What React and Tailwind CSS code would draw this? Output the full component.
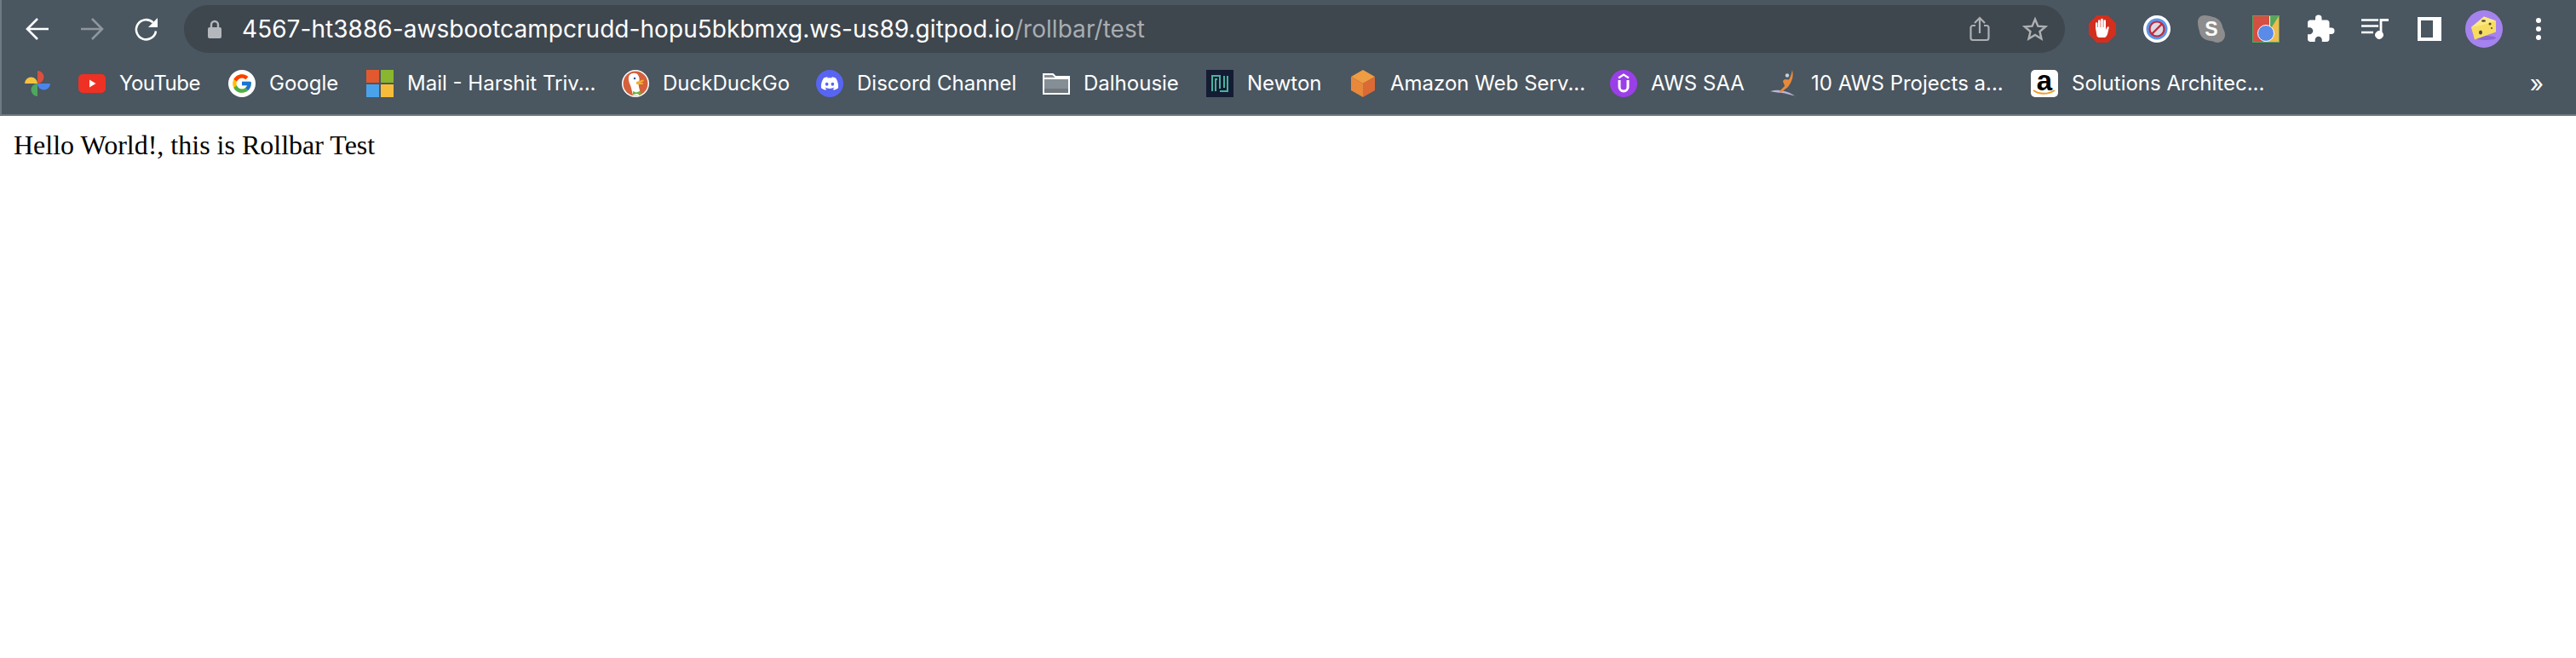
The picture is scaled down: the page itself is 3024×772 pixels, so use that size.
import { FaDiscord } from 'react-icons/fa';
import { FcGoogle } from 'react-icons/fc';
import { MdExtension } from 'react-icons/md';

function Back({ color = '#ffffff', flip = false }) {
  return (
    <svg width="28" height="28" viewBox="0 0 28 28" fill="none" stroke={color} strokeWidth="2.6" className={flip ? 'rotate-180' : ''}>
      <path d="M27 14H2.5M14 2 2 14l12 12" />
    </svg>
  );
}

function Reload() {
  return (
    <svg width="30" height="30" viewBox="0 0 30 30" fill="none">
      <path d="M22.6 7.4A11.6 11.6 0 1 0 26 17.5" stroke="#ffffff" strokeWidth="2.6" />
      <path d="M28 2v11H17z" fill="#ffffff" />
    </svg>
  );
}

function Lock() {
  return (
    <svg width="16" height="22" viewBox="0 0 16 22">
      <path d="M4 10V6a4 4 0 0 1 8 0v4" fill="none" stroke="#b4b8bd" strokeWidth="2.4" />
      <rect y="9" width="16" height="13" rx="2" fill="#b4b8bd" />
    </svg>
  );
}

function Share() {
  return (
    <svg width="24" height="30" viewBox="0 0 24 30" fill="none" stroke="#adb0b3" strokeWidth="2.2">
      <path d="M7 11H4a2.5 2.5 0 0 0-2.5 2.5v12A2.5 2.5 0 0 0 4 28h16a2.5 2.5 0 0 0 2.5-2.5v-12A2.5 2.5 0 0 0 20 11h-3" />
      <path d="M12 20V2M6 8l6-6 6 6" />
    </svg>
  );
}

function Star() {
  return (
    <svg width="30" height="30" viewBox="0 0 30 30" fill="none" stroke="#adb0b3" strokeWidth="2.4" strokeLinejoin="miter">
      <path d="m15 3.5 3.4 8.1 8.7.7-6.6 5.7 2 8.5-7.500-4.500-7.500 4.500 2-8.500-6.600-5.700 8.700-.7z" />
    </svg>
  );
}

function AdBlock() {
  return (
    <svg width="32" height="32" viewBox="0 0 32 32">
      <path d="M9.500 0h13L32 9.500v13L22.500 32h-13L0 22.500v-13z" fill="#d32f1f" />
      <path d="M9.500 24 8 15V9.500a1.200 1.200 0 0 1 2.400 0V14h.6V6.500a1.300 1.300 0 0 1 2.600 0V14h.6V5a1.300 1.300 0 0 1 2.600 0v9h.6V6.500a1.300 1.300 0 0 1 2.600 0V17l1.600-3c.8-1.300 2.600-.6 2.100.8L22 22c-.8 2-2 4-3.500 4h-5.500c-1.500 0-3-.6-3.500-2z" fill="#ffffff" />
    </svg>
  );
}

function NoSign() {
  return (
    <svg width="32" height="32" viewBox="0 0 32 32" fill="none">
      <circle cx="16" cy="16" r="16" fill="#ffffff" />
      <circle cx="16" cy="16" r="12.500" fill="#5a96e8" />
      <circle cx="16" cy="16" r="8.500" fill="#d8dce4" stroke="#c4283c" strokeWidth="2.200" />
      <path d="m10 22 12-12" stroke="#c4283c" strokeWidth="2.400" />
    </svg>
  );
}

function SkypeLike() {
  return (
    <div className="relative w-[32px] h-[32px] flex items-center justify-center">
      <svg width="32" height="32" viewBox="0 0 32 32" className="absolute inset-0">
        <path d="M8 0c4 0 7 1 10 2 6 1 10 6 11 11 0 2 3 5 3 10 0 5-4 9-9 9-3 0-5-2-8-2C8 29 3 26 2 19 1 15 0 12 0 8c0-5 3-8 8-8z" fill="#8d8d8d" />
      </svg>
      <span className="relative text-white font-bold text-[23px] leading-none font-['Liberation_Sans',sans-serif]">S</span>
    </div>
  );
}

function ColorBlock() {
  return (
    <svg width="32" height="32" viewBox="0 0 32 32">
      <rect width="32" height="32" fill="#57a65c" />
      <rect x="1" y="1" width="30" height="30" fill="#f0bb4f" />
      <path d="M1 1h19v17L13 31H1z" fill="#d54f42" />
      <path d="M20 1h11L22 15h-2z" fill="#57a65c" />
      <path d="M20 1h1v18h-1z" fill="#ffffff" />
      <circle cx="16" cy="21" r="9.500" fill="#5a8be8" stroke="#ffffff" />
    </svg>
  );
}

function Media() {
  return (
    <svg width="32" height="24" viewBox="0 0 32 24" fill="none" stroke="#ffffff">
      <path d="M0 1.500h20M0 8.500h20M0 16h14" strokeWidth="2.600" />
      <path d="M23 19V1.500h9" strokeWidth="2.800" />
      <circle cx="21" cy="19" r="4.500" fill="#ffffff" />
    </svg>
  );
}

function SidePanel() {
  return (
    <svg width="28" height="28" viewBox="0 0 28 28">
      <path d="M0 0h28v28H0zM4 4v20h14V4z" fill="#ffffff" fillRule="evenodd" />
    </svg>
  );
}

function Cheese() {
  return (
    <svg width="44" height="44" viewBox="0 0 44 44">
      <circle cx="22" cy="22" r="22" fill="#a583ee" />
      <ellipse cx="24" cy="32.500" rx="12" ry="2.500" fill="#8a66d8" />
      <path d="M7 20 22 7.500l14 5v13L11 34.500z" fill="#f6dd62" />
      <path d="M7 20 22 7.500l14 5-15 4.500z" fill="#fbe983" />
      <ellipse cx="21.500" cy="12.500" rx="2.500" ry="1.200" fill="#4f4738" />
      <circle cx="29" cy="16" r="1.500" fill="#4f4738" />
      <circle cx="31" cy="21" r="1" fill="#4f4738" />
      <ellipse cx="18" cy="26" rx="2" ry="2.500" fill="#4f4738" />
    </svg>
  );
}

function Dots() {
  return (
    <svg width="8" height="28" viewBox="0 0 8 28" fill="#ffffff">
      <circle cx="4" cy="4" r="3" />
      <circle cx="4" cy="14" r="3" />
      <circle cx="4" cy="24" r="3" />
    </svg>
  );
}

function Photos() {
  return (
    <svg width="32" height="32" viewBox="0 0 32 32">
      <path d="M16 1a7.500 7.500 0 0 1 0 15z" fill="#d9503f" />
      <path d="M31 16a7.500 7.500 0 0 1-15 0z" fill="#4c85ea" />
      <path d="M16 31a7.500 7.500 0 0 1 0-15z" fill="#4fa65d" />
      <path d="M1 16a7.500 7.500 0 0 1 15 0z" fill="#f4c33d" />
    </svg>
  );
}

function YouTube() {
  return (
    <svg width="32" height="32" viewBox="0 0 32 32">
      <rect y="5" width="32" height="22" rx="5" fill="#ee3124" />
      <path d="m13 11.500 7.500 4.500-7.500 4.500z" fill="#ffffff" />
    </svg>
  );
}

function GoogleIcon() {
  return (
    <div className="w-[32px] h-[32px] rounded-full bg-white flex items-center justify-center">
      <FcGoogle size={26} />
    </div>
  );
}

function Microsoft() {
  return (
    <svg width="32" height="32" viewBox="0 0 32 32">
      <rect width="15" height="15" fill="#e2592f" />
      <rect x="17" width="15" height="15" fill="#8ab52f" />
      <rect y="17" width="15" height="15" fill="#4aa3ea" />
      <rect x="17" y="17" width="15" height="15" fill="#f7bd3a" />
    </svg>
  );
}

function Duck() {
  return (
    <svg width="32" height="32" viewBox="0 0 32 32">
      <circle cx="16" cy="16" r="16" fill="#ffffff" />
      <circle cx="16" cy="16" r="14.500" fill="#d5613c" />
      <path d="M9 6c3-3 8-3 10 0 2 3 2 6 1 8-1 3 0 6 1 10l-1 6h-7c-1-5-2-9-3-12-2-4-3-9-1-12z" fill="#ffffff" />
      <path d="m17 14 8-2.500c1 0 1 1.500 0 2l-3 1.500 3 .5c.5.800 0 1.500-1 1.500h-7z" fill="#f4b12c" />
      <path d="m13 25 4 1.500 5-2v5l-5-1.500-4 1.500z" fill="#6fb53a" />
      <circle cx="15" cy="10" r="1.200" fill="#2d4f8e" />
    </svg>
  );
}

function DiscordIcon() {
  return (
    <div className="w-[32px] h-[32px] rounded-full bg-[#5865f2] flex items-center justify-center text-white">
      <FaDiscord size={22} />
    </div>
  );
}

function Folder() {
  return (
    <svg width="32" height="32" viewBox="0 0 32 32">
      <path d="M1 5h11l3 3h16v20H1z" fill="#868e95" stroke="#ffffff" strokeWidth="2" />
      <path d="M2 10h28" stroke="#ffffff" strokeWidth="2" />
      <rect x="2" y="22" width="28" height="5" fill="#6f767d" />
    </svg>
  );
}

function NewtonIcon() {
  return (
    <svg width="32" height="32" viewBox="0 0 32 32" fill="none">
      <rect width="32" height="32" fill="#141c33" />
      <path d="M7 25V7h9v15M25 7v18h-9" stroke="#47b39c" strokeWidth="2" />
      <path d="M11 25V11h2M21 7v14" stroke="#47b39c" strokeWidth="2" />
    </svg>
  );
}

function AwsBox() {
  return (
    <svg width="32" height="32" viewBox="0 0 32 32">
      <path d="m16 0 14 8-14 8L2 8z" fill="#f09c42" />
      <path d="m2 8 14 8v16L2 24z" fill="#e8883a" />
      <path d="m30 8-14 8v16l14-8z" fill="#dc6a35" />
    </svg>
  );
}

function Udemy() {
  return (
    <svg width="32" height="32" viewBox="0 0 32 32" fill="none">
      <circle cx="16" cy="16" r="16" fill="#9a3fe8" />
      <path d="m10 9.500 6-4 6 4" stroke="#ffffff" strokeWidth="2.200" />
      <path d="M11 12v8a5 5 0 0 0 10 0v-8" stroke="#ffffff" strokeWidth="3" />
    </svg>
  );
}

function Figure() {
  return (
    <svg width="32" height="32" viewBox="0 0 32 32" fill="none">
      <path d="M0 25c6-1.500 11-1.500 15-.5 5 1 10 3 14 6-6-1-11-3-15-3.500-5-.6-10-.5-14-2z" fill="#b9b4d8" />
      <path d="M26 0c1 5 1 9-1 13-1 3-3 5-4 7l-9 7-1-2 6-6c0-2-2-4-2-6l2-2 5 .5c2-3 3-7 4-11.500z" fill="#e8893a" />
      <circle cx="20" cy="6.500" r="2.200" fill="#c8d0d8" />
    </svg>
  );
}

function Amazon() {
  return (
    <div className="relative w-[32px] h-[32px] rounded-[5px] bg-white flex justify-center text-black">
      <span className="text-[33px] leading-[26px] font-bold font-['Liberation_Sans',sans-serif]">a</span>
      <svg width="32" height="32" viewBox="0 0 32 32" fill="none" className="absolute inset-0">
        <path d="M3 24c7 5 17 5 25 0" stroke="#f39c27" strokeWidth="2" />
      </svg>
    </div>
  );
}

const bookmarks = [
  { icon: Photos, label: '', width: 'w-0 mr-[-2px]' },
  { icon: YouTube, label: 'YouTube', width: 'w-[94px] tracking-[-0.5px]' },
  { icon: GoogleIcon, label: 'Google', width: 'w-[80px]' },
  { icon: Microsoft, label: 'Mail - Harshit Triv...', width: 'w-[218px]' },
  { icon: Duck, label: 'DuckDuckGo', width: 'w-[146px]' },
  { icon: DiscordIcon, label: 'Discord Channel', width: 'w-[184px]' },
  { icon: Folder, label: 'Dalhousie', width: 'w-[110px]' },
  { icon: NewtonIcon, label: 'Newton', width: 'w-[86px]' },
  { icon: AwsBox, label: 'Amazon Web Serv...', width: 'w-[224px]' },
  { icon: Udemy, label: 'AWS SAA', width: 'w-[106px]' },
  { icon: Figure, label: '10 AWS Projects a...', width: 'w-[224px]' },
  { icon: Amazon, label: 'Solutions Architec...', width: 'w-[224px]' },
];

function IconButton({ children }) {
  return <div className="w-[64px] h-[56px] shrink-0 flex items-center justify-center">{children}</div>;
}

export default function App() {
  return (
    <div className="min-h-screen bg-white">
      <div className="bg-[#4a5660] border-l-2 border-b-2 border-[#6d7a83] font-['Inter',sans-serif] text-white">
        <div className="flex items-start h-[68px] pt-[6px] pl-[10px]">
          <IconButton><Back /></IconButton>
          <IconButton><Back color="#8f979d" flip /></IconButton>
          <IconButton><Reload /></IconButton>
          <div className="ml-[12px] w-[2208px] h-[56px] shrink-0 rounded-full bg-[#3e464e] flex items-center pl-[28px] pr-[20px]">
            <Lock />
            <div className="ml-[24px] text-[28px] leading-none tracking-[0.05px] whitespace-nowrap">
              4567-ht3886-awsbootcampcrudd-hopu5bkbmxg.ws-us89.gitpod.io<span className="text-[#a9adb1]">/rollbar/test</span>
            </div>
            <div className="ml-auto flex items-center gap-[38px]">
              <Share />
              <Star />
            </div>
          </div>
          <div className="ml-[12px] flex">
            <IconButton><AdBlock /></IconButton>
            <IconButton><NoSign /></IconButton>
            <IconButton><SkypeLike /></IconButton>
            <IconButton><ColorBlock /></IconButton>
            <IconButton><MdExtension size={36} color="#ffffff" /></IconButton>
            <IconButton><Media /></IconButton>
            <IconButton><SidePanel /></IconButton>
            <IconButton><Cheese /></IconButton>
            <IconButton><Dots /></IconButton>
          </div>
        </div>
        <div className="flex items-center h-[66px] pb-[6px] pl-[26px] pr-[38px]">
          {bookmarks.map(({ icon: Icon, label, width }, i) => (
            <div key={label || 'photos'} className={i === 0 ? 'flex items-center mr-[32px] shrink-0' : 'flex items-center mr-[34px] last:mr-0 shrink-0'}>
              <Icon />
              {label && (
                <span className={`ml-[16px] text-[24px] leading-none whitespace-nowrap ${width}`}>{label}</span>
              )}
            </div>
          ))}
          <span className="ml-auto text-[28px] leading-none">»</span>
        </div>
      </div>
      <p className="m-[16px] text-[32px] leading-[37px] text-black font-['Liberation_Serif',serif]">Hello World!, this is Rollbar Test</p>
    </div>
  );
}
